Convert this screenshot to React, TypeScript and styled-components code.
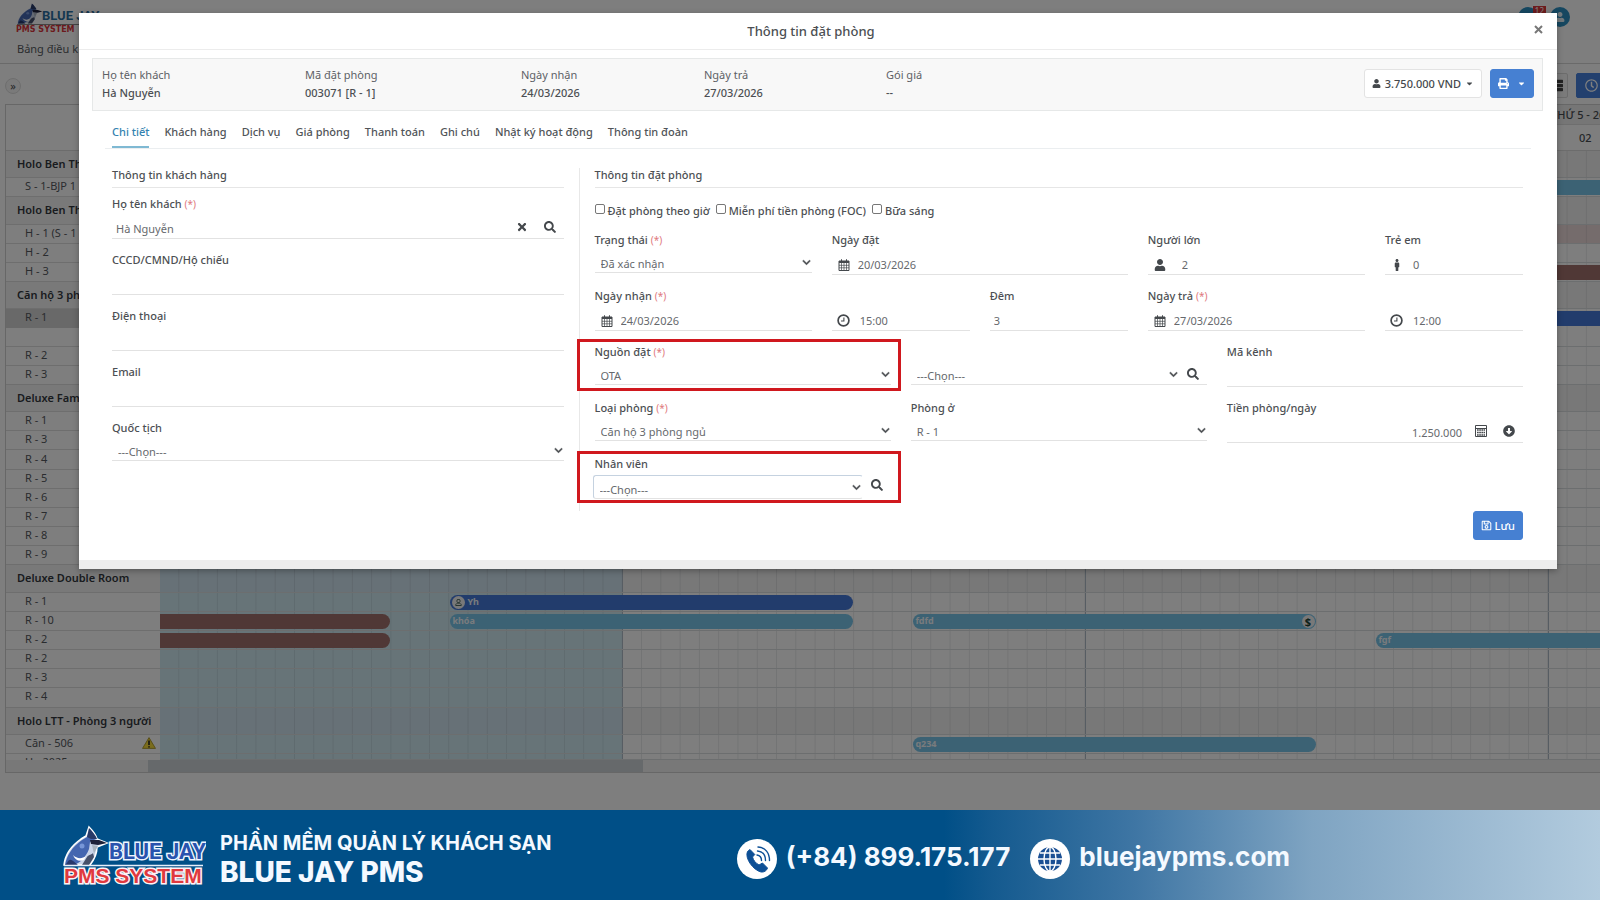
import React, { useId } from 'react';
import styled, { createGlobalStyle, css } from 'styled-components';
import {
  FaUser,
  FaPrint,
  FaCaretDown,
  FaTimes,
  FaSearch,
  FaChevronDown,
  FaRegSave,
  FaRegClock,
  FaArrowAltCircleDown,
  FaMale,
  FaThList,
  FaRegUser,
} from 'react-icons/fa';

const GlobalStyle = createGlobalStyle`
  *, *::before, *::after { box-sizing: border-box; }
  body {
    margin: 0;
    font-family: "Noto Sans", "Open Sans", sans-serif;
    font-size: 11px;
    color: #4c4f53;
    background: #fdfdfd;
    overflow: hidden;
  }
  button, input, select { font: inherit; color: inherit; }
`;

/* ---------- Page shell ---------- */

const Page = styled.div`
  display: flex;
  flex-direction: column;
  min-height: 100vh;
`;

const Workspace = styled.div`
  position: relative;
  flex: 1;
  min-height: 810px;
  overflow: hidden;
  background: #fdfdfd;
`;

const TopBar = styled.header`
  display: flex;
  justify-content: space-between;
  height: 64px;
  padding: 3px 30px 0 16px;
  border-bottom: 1px solid #d4d4d4;
`;

const Brand = styled.div`
  display: flex;
  flex-direction: column;
  gap: 6px;
`;

const NavLink = styled.a`
  padding-left: 1px;
  line-height: 18px;
  color: #55595e;
  text-decoration: none;
`;

const TopActions = styled.div`
  display: flex;
  gap: 12px;
  padding-top: 4px;
`;

const RoundButton = styled.button`
  position: relative;
  display: grid;
  place-items: center;
  width: 20px;
  height: 20px;
  padding: 0;
  border: 0;
  border-radius: 50%;
  background: #2d8fc0;
  color: #e8f4fb;
  font-size: 10px;
`;

const Badge = styled.span`
  position: absolute;
  top: -1px;
  right: -8px;
  padding: 0 2px;
  background: #d9363b;
  color: #fff;
  font-size: 8px;
  line-height: 10px;
`;

const ToolBar = styled.div`
  display: flex;
  justify-content: space-between;
  align-items: center;
  height: 40px;
  padding: 3px 0 0 5px;
`;

const ExpandButton = styled.button`
  width: 16px;
  height: 16px;
  padding: 0;
  border: 1px solid #dcdcdc;
  border-radius: 50%;
  background: #f4f4f4;
  line-height: 12px;
`;

const ToolGroup = styled.div`
  display: flex;
  gap: 8px;
  margin-right: -6px;
`;

const ToolButton = styled.button<{ $active?: boolean }>`
  display: grid;
  place-items: center;
  width: ${(p) => (p.$active ? 30 : 24)}px;
  height: 25px;
  padding: 0;
  border: 1px solid ${(p) => (p.$active ? '#4680dc' : '#d9d9d9')};
  border-radius: 2px;
  background: ${(p) => (p.$active ? '#4680dc' : '#f7f7f7')};
  color: ${(p) => (p.$active ? '#fff' : '#444')};
  font-size: 13px;
`;

/* ---------- Scheduler ---------- */

const Scheduler = styled.section`
  display: flex;
  flex-direction: column;
  height: 669px;
  margin-left: 5px;
  border: 1px solid #cfcfcf;
  border-right: 0;
  overflow: hidden;
`;

const SchedHead = styled.div`
  display: flex;
  height: 46px;
  border-bottom: 1px solid #d8d8d8;
`;

const Corner = styled.div`
  flex: 0 0 154px;
  border-right: 1px solid #d8d8d8;
`;

const Days = styled.div`
  display: flex;
`;

const Day = styled.div`
  flex: 0 0 463px;
  border-right: 1px solid #c8c8c8;
  color: #494d52;
`;

const DayName = styled.div`
  height: 20px;
  padding-left: 2px;
  background: #ededed;
  border-bottom: 1px solid #dcdcdc;
  font-weight: 500;
  line-height: 19px;
  white-space: nowrap;
`;

const Hours = styled.div`
  display: grid;
  grid-template-columns: repeat(12, 1fr);
  padding-left: 30px;
  font-weight: 500;
  line-height: 26px;
`;

const Lanes = styled.div`
  flex: 0 0 603px;
  display: flex;
  flex-direction: column;
`;

const kinds = {
  group: 27,
  room: 19,
  double: 37,
};
type Kind = keyof typeof kinds;

const Lane = styled.div<{ $kind: Kind }>`
  flex: ${(p) => kinds[p.$kind]} 0 0;
  min-height: 0;
  display: flex;
`;

const LaneName = styled.div<{ $kind: Kind }>`
  flex: 0 0 154px;
  min-width: 0;
  display: flex;
  align-items: ${(p) => (p.$kind === 'double' ? 'flex-start' : 'center')};
  justify-content: space-between;
  padding: 0 4px ${(p) => (p.$kind === 'group' ? 0 : 2)}px ${(p) => (p.$kind === 'group' ? 11 : 19)}px;
  border-bottom: 1px solid #dcdcdc;
  background: ${(p) =>
    p.$kind === 'double'
      ? 'linear-gradient(#d3d3d3 0 19px, transparent 19px)'
      : p.$kind === 'group'
        ? '#f3f3f3'
        : 'transparent'};
  color: ${(p) => (p.$kind === 'group' ? '#33373d' : '#55595e')};
  font-weight: ${(p) => (p.$kind === 'group' ? 600 : 400)};
  line-height: 16px;
  white-space: nowrap;
`;

const Track = styled.div<{ $kind: Kind; $blocked?: boolean }>`
  position: relative;
  flex: 0 0 1852px;
  border-bottom: 1px solid #d9dcde;
  background-color: ${(p) => (p.$blocked ? '#ebd9d9' : p.$kind === 'group' ? '#f1f1f1' : 'transparent')};
  background-image:
    linear-gradient(to right, transparent 462px, #aebac6 462px),
    linear-gradient(to right, transparent calc(100% - 1px), rgba(90, 100, 110, 0.14) calc(100% - 1px)),
    linear-gradient(to right, ${(p) => (p.$kind === 'group' ? '#cfe2ee' : '#cfe9f1')} 463px, transparent 463px);
  background-size: 463px 100%, calc(100% / 96) 100%, 100% 100%;
`;

const tones = {
  booked: '#79c4e8',
  checked: '#4478d8',
  closed: '#a0716c',
};

const Bar = styled.div<{ $tone: keyof typeof tones; $flatStart?: boolean }>`
  position: absolute;
  top: 2px;
  display: flex;
  align-items: center;
  justify-content: space-between;
  height: 15px;
  padding: 0 1px 0 2px;
  border-radius: ${(p) => (p.$flatStart ? '0 8px 8px 0' : '8px')};
  background: ${(p) => tones[p.$tone]};
  color: #f2f7fb;
  font-size: 9px;
  font-weight: 700;
  line-height: 14px;
`;

const BarLabel = styled.span`
  display: flex;
  align-items: center;
  gap: 2px;
`;

const BarDot = styled.span`
  display: grid;
  place-items: center;
  width: 13px;
  height: 13px;
  border-radius: 50%;
  background: #f2f2f2;
  color: #1c4236;
  font-size: 11px;
`;

const LaneClip = styled.div`
  flex: 1;
  display: flex;
  min-height: 0;
  overflow: hidden;
`;

const ClippedName = styled(LaneName)`
  align-items: flex-start;
  height: 18px;
`;

const ScrollTrack = styled.div`
  flex: 0 0 12px;
  padding-left: 142px;
  background: #f1f1f1;
`;

const ScrollThumb = styled.div`
  width: 495px;
  height: 12px;
  background: #ccd2d6;
`;

interface BarData {
  from: number;
  to: number;
  tone: keyof typeof tones;
  label?: string;
  mark?: 'start' | 'end';
}
interface LaneData {
  name: string;
  kind: Kind;
  bars?: BarData[];
  warn?: boolean;
  blocked?: boolean;
}

const room = (name: string, bars?: BarData[], extra?: Partial<LaneData>): LaneData => ({
  name,
  kind: 'room',
  bars,
  ...extra,
});
const group = (name: string): LaneData => ({ name, kind: 'group' });

const lanes: LaneData[] = [
  group('Holo Ben Th'),
  room('S - 1-BJP 1', [{ from: 63, to: 90, tone: 'booked' }]),
  group('Holo Ben Th'),
  room('H - 1 (S - 1', [], { blocked: true }),
  room('H - 2'),
  room('H - 3', [{ from: 63, to: 90, tone: 'closed' }]),
  group('Căn hộ 3 ph'),
  { name: 'R - 1', kind: 'double', bars: [{ from: 15, to: 84, tone: 'checked' }] },
  room('R - 2'),
  room('R - 3'),
  group('Deluxe Fami'),
  ...['1', '3', '4', '5', '6', '7', '8', '9'].map((n) => room(`R - ${n}`)),
  group('Deluxe Double Room'),
  room('R - 1', [{ from: 15, to: 36, tone: 'checked', label: 'Yh', mark: 'start' }]),
  room('R - 10', [
    { from: 0, to: 12, tone: 'closed' },
    { from: 15, to: 36, tone: 'booked', label: 'khóa' },
    { from: 39, to: 60, tone: 'booked', label: 'fdfd', mark: 'end' },
  ]),
  room('R - 2', [
    { from: 0, to: 12, tone: 'closed' },
    { from: 63, to: 84, tone: 'booked', label: 'fgf' },
  ]),
  room('R - 2'),
  room('R - 3'),
  room('R - 4'),
  group('Holo LTT - Phòng 3 người'),
  room('Căn - 506', [{ from: 39, to: 60, tone: 'booked', label: 'q234' }], { warn: true }),
];

const days = [
  { name: '', hours: [] },
  { name: '', hours: [] },
  { name: '', hours: [] },
  { name: 'THỨ 5 - 26', hours: ['02'] },
];

const WarningIcon = () => (
  <svg width="14" height="12" viewBox="0 0 14 12" aria-hidden="true">
    <path d="M7 .6 13.5 11.4H.5Z" fill="#f5d838" stroke="#a08c1c" strokeWidth=".8" />
    <path d="M7 3.6V8M7 9.2v1.4" stroke="#222" strokeWidth="1.6" />
  </svg>
);

/* ---------- Backdrop and dialog ---------- */

const Backdrop = styled.div`
  position: absolute;
  inset: 0;
  padding: 13px 43px 0 79px;
  background: rgba(0, 0, 0, 0.5);
`;

const Dialog = styled.section`
  background: #fff;
  border-bottom: 9px solid #ededed;
  box-shadow: 0 2px 6px rgba(0, 0, 0, 0.3);
`;

const DialogHead = styled.header`
  display: flex;
  align-items: center;
  height: 37px;
  padding: 0 12px;
  border-bottom: 1px solid #ececec;
`;

const DialogTitle = styled.h2`
  flex: 1;
  margin: 0;
  font-size: 13px;
  font-weight: 500;
  line-height: 18px;
  text-align: center;
`;

const IconButton = styled.button`
  display: grid;
  place-items: center;
  width: 28px;
  height: 18px;
  margin-top: -4px;
  padding: 0;
  border: 0;
  background: none;
  color: #44484c;
  font-size: 12px;
`;

const CloseButton = styled(IconButton)`
  width: 14px;
  color: #777;
  svg { stroke: currentColor; stroke-width: 2; fill: none; }
`;

const Summary = styled.div`
  display: flex;
  justify-content: space-between;
  align-items: flex-start;
  height: 53px;
  margin: 8px 14px 0 13px;
  padding: 7px 8px 0 9px;
  border: 1px solid #e6e8e8;
  background: #f8f8f8;
`;

const Facts = styled.dl`
  flex: 1;
  display: grid;
  grid-template-columns: 203px 216px 183px 182px 1fr;
  margin: 0;
  line-height: 18px;
  dt { color: #5d6166; }
  dd { margin: 0; font-weight: 500; }
`;

const SummaryActions = styled.div`
  display: flex;
  gap: 8px;
  padding-top: 3px;
`;

const Button = styled.button<{ $primary?: boolean }>`
  display: flex;
  align-items: center;
  gap: 4px;
  height: 29px;
  padding: 0 7px;
  border: 1px solid ${(p) => (p.$primary ? '#4680d2' : '#e3e3e3')};
  border-radius: 3px;
  background: ${(p) => (p.$primary ? '#4680d2' : '#fff')};
  color: ${(p) => (p.$primary ? '#fff' : '#44484c')};
  font-weight: 500;
`;

const PrintButton = styled(Button)`
  gap: 8px;
`;

const SaveButton = styled(Button)`
  gap: 3px;
`;

const Caret = styled(FaCaretDown)`
  font-size: 9px;
`;

const Tabs = styled.nav`
  display: flex;
  gap: 15px;
  height: 38px;
  margin: 0 26px;
  padding: 12px 7px 0;
  border-bottom: 1px solid #ebeef0;
`;

const Tab = styled.a<{ $current?: boolean }>`
  height: 25px;
  border-bottom: 2px solid ${(p) => (p.$current ? '#7fb9d3' : 'transparent')};
  color: ${(p) => (p.$current ? '#3382b0' : '#505458')};
  font-weight: 500;
  line-height: 18px;
  text-decoration: none;
  white-space: nowrap;
`;

const Columns = styled.div`
  display: flex;
  margin: 19px 34px 0 33px;
`;

const GuestPane = styled.section`
  flex: 0 0 32%;
  display: flex;
  flex-direction: column;
  gap: 11px;
`;

const BookingPane = styled.section`
  flex: 1;
  display: flex;
  flex-direction: column;
  min-height: 343px;
  margin-left: 15px;
  padding-left: 15px;
  border-left: 1px solid #e8e8e8;
`;

const PaneTitle = styled.h3`
  height: 20px;
  margin: 0 0 -5px;
  border-bottom: 1px solid #e6e6e6;
  font-size: 11px;
  font-weight: 500;
  line-height: 14px;
`;

const Checks = styled.div`
  display: flex;
  gap: 6px;
  padding: 18px 0 11px;
`;

const Check = styled.label`
  display: flex;
  align-items: center;
  gap: 3px;
  height: 18px;
  font-weight: 500;
  input {
    appearance: none;
    width: 10px;
    height: 10px;
    margin: -2px 0 0;
    border: 1px solid #777;
    border-radius: 2px;
    background: #fff;
  }
`;

const FieldGrid = styled.div`
  display: grid;
  grid-template-columns: repeat(12, 1fr);
  column-gap: 20px;
  row-gap: 11px;
`;

const Field = styled.div<{ $span?: number }>`
  position: relative;
  display: flex;
  flex-direction: column;
  min-width: 0;
  height: 45px;
  ${(p) =>
    p.$span &&
    css`
      grid-column: span ${p.$span};
    `}
`;

const Label = styled.label`
  height: 18px;
  font-weight: 500;
  line-height: 19px;
`;

const Required = styled.span`
  color: #e0787c;
  font-size: 10px;
  font-weight: 400;
`;

const Control = styled.div<{ $select?: boolean; $boxed?: boolean }>`
  position: relative;
  display: flex;
  align-items: center;
  height: ${(p) => (p.$boxed ? 27 : p.$select ? 25 : 27)}px;
  padding-top: ${(p) => (p.$boxed ? 3 : 7)}px;
  border-bottom: ${(p) => (p.$boxed ? 0 : 1)}px solid #e2e2e2;
`;

const Glyph = styled.span`
  display: grid;
  place-items: center;
  flex: 0 0 24px;
  color: #44484c;
  font-size: 12px;
`;

const Input = styled.input<{ $right?: boolean; $indent?: number }>`
  flex: 1;
  min-width: 0;
  width: 0;
  height: 18px;
  padding: 0 0 0 ${(p) => p.$indent ?? 2}px;
  border: 0;
  outline: 0;
  background: none;
  color: #66696d;
  text-align: ${(p) => (p.$right ? 'right' : 'left')};
`;

const PriceInput = styled(Input)`
  padding-right: 5px;
`;

const SelectWrap = styled.div<{ $boxed?: boolean }>`
  flex: 1;
  display: flex;
  align-items: center;
  min-width: 0;
  height: ${(p) => (p.$boxed ? 24 : 17)}px;
  margin-left: ${(p) => (p.$boxed ? -2 : 0)}px;
  padding-top: ${(p) => (p.$boxed ? 4 : 0)}px;
  border: ${(p) => (p.$boxed ? '1px solid #c5d2e0' : '0')};
  border-right-color: transparent;
  border-bottom-color: #e2e2e2;
  border-radius: 3px;
  svg {
    flex: none;
    margin: 0 1px 3px -12px;
    font-size: 9px;
    stroke: currentColor;
    stroke-width: 20;
    pointer-events: none;
  }
`;

const Select = styled.select`
  appearance: none;
  flex: 1;
  width: 0;
  min-width: 0;
  height: 17px;
  padding: 0 6px;
  border: 0;
  outline: 0;
  background: none;
  color: #66696d;
`;

const Highlight = styled.div`
  position: absolute;
  inset: -3px -10px -4px -18px;
  border: 3px solid #d0181e;
  pointer-events: none;
`;

const DialogFoot = styled.div`
  display: flex;
  justify-content: flex-end;
  margin: 0 34px;
  padding-bottom: 20px;
`;

const CalendarIcon = () => (
  <svg width="12" height="12" viewBox="0 0 12 12" aria-hidden="true">
    <path d="M1 2h10v9.500H1Z" fill="none" stroke="currentColor" />
    <path d="M1 2h10v2H1ZM3 .3h1v2H3ZM8 .3h1v2H8Z" fill="currentColor" />
    <path d="M1 6.300h10M1 8.800h10M3.500 4v7M6 4v7M8.500 4v7" stroke="currentColor" strokeWidth=".7" />
  </svg>
);

/* Clock face with the hands at nine o'clock */
const ClockIcon = () => (
  <svg width="13" height="13" viewBox="0 0 13 13" aria-hidden="true">
    <circle cx="6.500" cy="6.500" r="5.400" fill="none" stroke="currentColor" strokeWidth="1.700" />
    <path d="M6.900 3.500V7H4" fill="none" stroke="currentColor" strokeWidth="1.100" />
  </svg>
);

const CalculatorIcon = () => (
  <svg width="12" height="12" viewBox="0 0 12 12" aria-hidden="true">
    <path d="M.5 .5h11v11H.5ZM.5 3.500h11" fill="none" stroke="currentColor" />
    <path d="M2 5h8M2 7.500h8M2 10h8" stroke="currentColor" strokeWidth="1.600" strokeDasharray="1.700 .5" />
  </svg>
);

interface FieldProps {
  label?: string;
  name?: string;
  required?: boolean;
  span?: number;
}

const LabelRow = ({ id, label, required }: { id: string; label?: string; required?: boolean }) => (
  <Label htmlFor={id}>
    {label} {required && <Required>(*)</Required>}
  </Label>
);

const TextField = ({
  label,
  name,
  required,
  span,
  value = '',
  glyph,
  price,
  indent,
  children,
}: FieldProps & {
  value?: string;
  glyph?: React.ReactNode;
  price?: boolean;
  indent?: number;
  children?: React.ReactNode;
}) => {
  const id = useId();
  const Box = price ? PriceInput : Input;
  return (
    <Field $span={span}>
      {label ? <LabelRow id={id} label={label} required={required} /> : <Label as="span" />}
      <Control>
        {glyph && <Glyph>{glyph}</Glyph>}
        <Box id={id} aria-label={label ? undefined : name} defaultValue={value} $right={price} $indent={indent} />
        {children}
      </Control>
    </Field>
  );
};

const SelectField = ({
  label,
  name,
  required,
  span,
  value,
  search,
  boxed,
  highlight,
}: FieldProps & { value: string; search?: boolean; boxed?: boolean; highlight?: boolean }) => {
  const id = useId();
  return (
    <Field $span={span}>
      {label ? <LabelRow id={id} label={label} required={required} /> : <Label as="span" />}
      <Control $select $boxed={boxed}>
        <SelectWrap $boxed={boxed}>
          <Select id={id} aria-label={label ? undefined : name} defaultValue={value}>
            <option>{value}</option>
          </Select>
          <FaChevronDown />
        </SelectWrap>
        {search && (
          <IconButton aria-label="Tìm kiếm">
            <FaSearch />
          </IconButton>
        )}
      </Control>
      {highlight && <Highlight />}
    </Field>
  );
};

/* ---------- Promotional footer ---------- */

const Promo = styled.footer`
  display: flex;
  align-items: center;
  height: 90px;
  padding-left: 62px;
  background: linear-gradient(to right, #004f87 0 59%, #145a8f 62%, #3f76a4 71%, #7fa4c2 82%, #b2cbde 100%);
  color: #f4f9ff;
`;

const PromoSide = styled.div`
  flex: 0 0 44%;
  display: flex;
  gap: 14px;
`;

const Slogan = styled.div`
  padding-top: 6px;
  font-family: Inter, "Noto Sans", sans-serif;
  font-weight: 700;
  white-space: nowrap;
`;

const SloganTop = styled.div`
  font-size: 20px;
  line-height: 28px;
`;

const SloganMain = styled.div`
  font-size: 28px;
  font-weight: 800;
  line-height: 30px;
`;

const Contact = styled.a`
  display: flex;
  align-items: center;
  gap: 9px;
  margin: 8px 22px 0 -2px;
  color: inherit;
  font-family: Inter, "Noto Sans", sans-serif;
  font-size: 26px;
  font-weight: 700;
  line-height: 40px;
  text-decoration: none;
  white-space: nowrap;
  span { margin-top: -4px; }
`;

const Bird = () => (
  <g>
    <path d="M2 38C3 28 9 19 19 12L24 9 27 0C32 5 34 8 35 12L45 16 35 20C35 27 32 33 28 38Z" fill="#c9d4e8" stroke="#fff" strokeWidth="1.500" />
    <path d="M3 38C5 28 10 20 20 13L25 10 28 2C31 6 33 9 34 12L28 15 27 22C24 30 18 36 12 38Z" fill="#4466b0" />
    <path d="M27 1C31 5 34 9 35 12L29 12 25 10Z" fill="#293a68" />
    <path d="M28 13 37 13 45 16 36 18 29 17Z" fill="#1c2038" />
    <path d="M30 18 36 19C34 23 33 24 32 27Z" fill="#a9b3bf" />
    <path d="M25 30C27 27 30 28 31 26L32 30 27 38H20Z" fill="#46506a" />
    <path d="M11 28C15 32 20 32 24 29L22 33C17 35 13 33 11 28Z" fill="#fff" />
    <path d="M5 36C8 30 10 33 16 38H3Z" fill="#27386b" />
    <circle cx="20" cy="19" r="2.500" fill="#7797d8" />
  </g>
);

const FooterLogo = () => (
  <svg width="144" height="64" viewBox="0 -4 144 64" role="img" aria-label="Blue Jay PMS System">
    <Bird />
    <text x="47" y="32" fontFamily="Roboto, sans-serif" fontSize="22" fontWeight="700" fill="#2953ae" stroke="#eef5ff" strokeWidth="3" paintOrder="stroke">
      BLUE JAY
    </text>
    <path d="M2 38.500H141" stroke="#e6eefb" strokeWidth="1.500" />
    <text x="2" y="56" fontFamily='"Liberation Sans", sans-serif' fontSize="21" fontWeight="700" fill="#e0393f" stroke="#fdf3f5" strokeWidth="3" paintOrder="stroke">
      PMS SYSTEM
    </text>
  </svg>
);

const TopLogo = () => (
  <svg width="110" height="31" viewBox="0 0 110 31" role="img" aria-label="Blue Jay PMS System">
    <svg width="27" height="21" viewBox="0 0 46 39" preserveAspectRatio="none">
      <Bird />
    </svg>
    <text x="26" y="17" fontFamily="Roboto, sans-serif" fontSize="13" fontWeight="700" fill="#2a6fa0">
      BLUE JAY
    </text>
    <path d="M1 21.500H80" stroke="#888" />
    <text x="0" y="29" fontFamily='"DejaVu Sans", sans-serif' fontSize="8" fontWeight="700" fill="#d8353b">
      PMS SYSTEM
    </text>
  </svg>
);

const PhoneBadge = () => (
  <svg width="40" height="40" viewBox="0 0 40 40" aria-hidden="true">
    <circle cx="20" cy="20" r="20" fill="#fff" />
    <path
      d="M13 10.500 10.500 12.500C7.500 19 16 31 24 33 27 33.500 30 31.500 30.500 29L25.500 24 22 26C18.500 24 16.500 21.500 15.500 18L17.800 15.500Z"
      fill="#0d4f96"
      stroke="#0d4f96"
      strokeLinejoin="round"
    />
    <path d="M20 16C23 16.500 24.500 18.500 24.500 21.500M20.500 12C26 12.500 28.500 16 28.500 21.500M21 8C28.500 8.500 32.500 14 32.500 21.500" fill="none" stroke="#0d4f96" strokeWidth="1.400" strokeLinecap="round" />
  </svg>
);

const GlobeBadge = () => (
  <svg width="40" height="40" viewBox="0 0 40 40" aria-hidden="true">
    <circle cx="20" cy="20" r="20" fill="#fff" />
    <circle cx="20" cy="20" r="12" fill="#1a4f94" />
    <path d="M20 8V32M8 20H32M10 14H30M10 26H30" stroke="#fff" strokeWidth="1.400" />
    <ellipse cx="20" cy="20" rx="6" ry="12" fill="none" stroke="#fff" strokeWidth="1.400" />
  </svg>
);

/* ---------- Screens ---------- */

const barStyle = (b: BarData) => {
  const inset = b.from === 0 ? 0 : 1;
  return {
    left: `calc(${(b.from / 96) * 100}% + ${inset}px)`,
    width: `calc(${((b.to - b.from) / 96) * 100}% - ${inset + 2}px)`,
  };
};

const RoomScheduler = () => (
  <Scheduler>
    <SchedHead>
      <Corner />
      <Days>
        {days.map((d, i) => (
          <Day key={i}>
            <DayName>{d.name}</DayName>
            <Hours>
              {d.hours.map((h) => (
                <span key={h}>{h}</span>
              ))}
            </Hours>
          </Day>
        ))}
      </Days>
    </SchedHead>
    <Lanes>
      {lanes.map((lane, i) => (
        <Lane key={i} $kind={lane.kind}>
          <LaneName $kind={lane.kind}>
            {lane.name}
            {lane.warn && <WarningIcon />}
          </LaneName>
          <Track $kind={lane.kind} $blocked={lane.blocked}>
            {lane.bars?.map((b, j) => (
              <Bar key={j} $tone={b.tone} $flatStart={b.from === 0} style={barStyle(b)}>
                <BarLabel>
                  {b.mark === 'start' && (
                    <BarDot>
                      <FaRegUser size={7} />
                    </BarDot>
                  )}
                  {b.label}
                </BarLabel>
                {b.mark === 'end' && <BarDot>$</BarDot>}
              </Bar>
            ))}
          </Track>
        </Lane>
      ))}
    </Lanes>
    <LaneClip>
      <ClippedName $kind="room">H - 2025</ClippedName>
      <Track $kind="room" />
    </LaneClip>
    <ScrollTrack>
      <ScrollThumb />
    </ScrollTrack>
  </Scheduler>
);

const tabs = ['Chi tiết', 'Khách hàng', 'Dịch vụ', 'Giá phòng', 'Thanh toán', 'Ghi chú', 'Nhật ký hoạt động', 'Thông tin đoàn'];

const facts = [
  ['Họ tên khách', 'Hà Nguyễn'],
  ['Mã đặt phòng', '003071 [R - 1]'],
  ['Ngày nhận', '24/03/2026'],
  ['Ngày trả', '27/03/2026'],
  ['Gói giá', '--'],
];

const BookingDialog = () => (
  <Dialog role="dialog" aria-labelledby="booking-title">
    <DialogHead>
      <DialogTitle id="booking-title">Thông tin đặt phòng</DialogTitle>
      <CloseButton aria-label="Đóng">
        <svg width="9" height="9" viewBox="0 0 9 9">
          <path d="M1 1l7 7M8 1l-7 7" />
        </svg>
      </CloseButton>
    </DialogHead>
    <Summary>
      <Facts>
        {facts.map(([k, v]) => (
          <div key={k}>
            <dt>{k}</dt>
            <dd>{v}</dd>
          </div>
        ))}
      </Facts>
      <SummaryActions>
        <Button>
          <FaUser size={9} /> 3.750.000 VND <Caret />
        </Button>
        <PrintButton $primary aria-label="In">
          <FaPrint /> <Caret />
        </PrintButton>
      </SummaryActions>
    </Summary>
    <Tabs>
      {tabs.map((t, i) => (
        <Tab key={t} href="#" $current={i === 0}>
          {t}
        </Tab>
      ))}
    </Tabs>
    <Columns>
      <GuestPane>
        <PaneTitle>Thông tin khách hàng</PaneTitle>
        <TextField label="Họ tên khách" required value="Hà Nguyễn" indent={4}>
          <IconButton aria-label="Xóa">
            <FaTimes />
          </IconButton>
          <IconButton aria-label="Tìm kiếm">
            <FaSearch />
          </IconButton>
        </TextField>
        <TextField label="CCCD/CMND/Hộ chiếu" />
        <TextField label="Điện thoại" />
        <TextField label="Email" />
        <SelectField label="Quốc tịch" value="---Chọn---" />
      </GuestPane>
      <BookingPane>
        <PaneTitle>Thông tin đặt phòng</PaneTitle>
        <Checks>
          <Check>
            <input type="checkbox" />
            Đặt phòng theo giờ
          </Check>
          <Check>
            <input type="checkbox" />
            Miễn phí tiền phòng (FOC)
          </Check>
          <Check>
            <input type="checkbox" />
            Bữa sáng
          </Check>
        </Checks>
        <FieldGrid>
          <SelectField label="Trạng thái" required span={3} value="Đã xác nhận" />
          <TextField label="Ngày đặt" span={4} value="20/03/2026" glyph={<CalendarIcon />} />
          <TextField label="Người lớn" span={3} value="2" glyph={<FaUser />} indent={10} />
          <TextField label="Trẻ em" span={2} value="0" glyph={<FaMale />} indent={4} />

          <TextField label="Ngày nhận" required span={3} value="24/03/2026" glyph={<CalendarIcon />} />
          <TextField name="Giờ nhận" span={2} value="15:00" glyph={<ClockIcon />} indent={4} />
          <TextField label="Đêm" span={2} value="3" indent={4} />
          <TextField label="Ngày trả" required span={3} value="27/03/2026" glyph={<CalendarIcon />} />
          <TextField name="Giờ trả" span={2} value="12:00" glyph={<ClockIcon />} indent={4} />

          <SelectField label="Nguồn đặt" required span={4} value="OTA" highlight />
          <SelectField name="Đại lý" span={4} value="---Chọn---" search />
          <TextField label="Mã kênh" span={4} />

          <SelectField label="Loại phòng" required span={4} value="Căn hộ 3 phòng ngủ" />
          <SelectField label="Phòng ở" span={4} value="R - 1" />
          <TextField label="Tiền phòng/ngày" span={4} value="1.250.000" price>
            <IconButton aria-label="Tính giá">
              <CalculatorIcon />
            </IconButton>
            <IconButton aria-label="Áp dụng">
              <FaArrowAltCircleDown />
            </IconButton>
          </TextField>

          <SelectField label="Nhân viên" span={4} value="---Chọn---" search boxed highlight />
        </FieldGrid>
      </BookingPane>
    </Columns>
    <DialogFoot>
      <SaveButton $primary>
        <FaRegSave /> Lưu
      </SaveButton>
    </DialogFoot>
  </Dialog>
);

export default function App() {
  return (
    <Page>
      <GlobalStyle />
      <Workspace>
        <TopBar>
          <Brand>
            <TopLogo />
            <NavLink href="#">Bảng điều k</NavLink>
          </Brand>
          <TopActions>
            <RoundButton aria-label="Thông báo">
              <Badge>12</Badge>
            </RoundButton>
            <RoundButton aria-label="Tài khoản">
              <FaUser />
            </RoundButton>
          </TopActions>
        </TopBar>
        <ToolBar>
          <ExpandButton aria-label="Mở rộng">»</ExpandButton>
          <ToolGroup>
            <ToolButton aria-label="Danh sách">
              <FaThList />
            </ToolButton>
            <ToolButton $active aria-label="Theo giờ">
              <FaRegClock />
            </ToolButton>
          </ToolGroup>
        </ToolBar>
        <RoomScheduler />
        <Backdrop>
          <BookingDialog />
        </Backdrop>
      </Workspace>
      <Promo>
        <PromoSide>
          <FooterLogo />
          <Slogan>
            <SloganTop>PHẦN MỀM QUẢN LÝ KHÁCH SẠN</SloganTop>
            <SloganMain>BLUE JAY PMS</SloganMain>
          </Slogan>
        </PromoSide>
        <Contact href="tel:+84899175177">
          <PhoneBadge />
          <span>(+84) 899.175.177</span>
        </Contact>
        <Contact href="https://bluejaypms.com">
          <GlobeBadge />
          <span>bluejaypms.com</span>
        </Contact>
      </Promo>
    </Page>
  );
}
